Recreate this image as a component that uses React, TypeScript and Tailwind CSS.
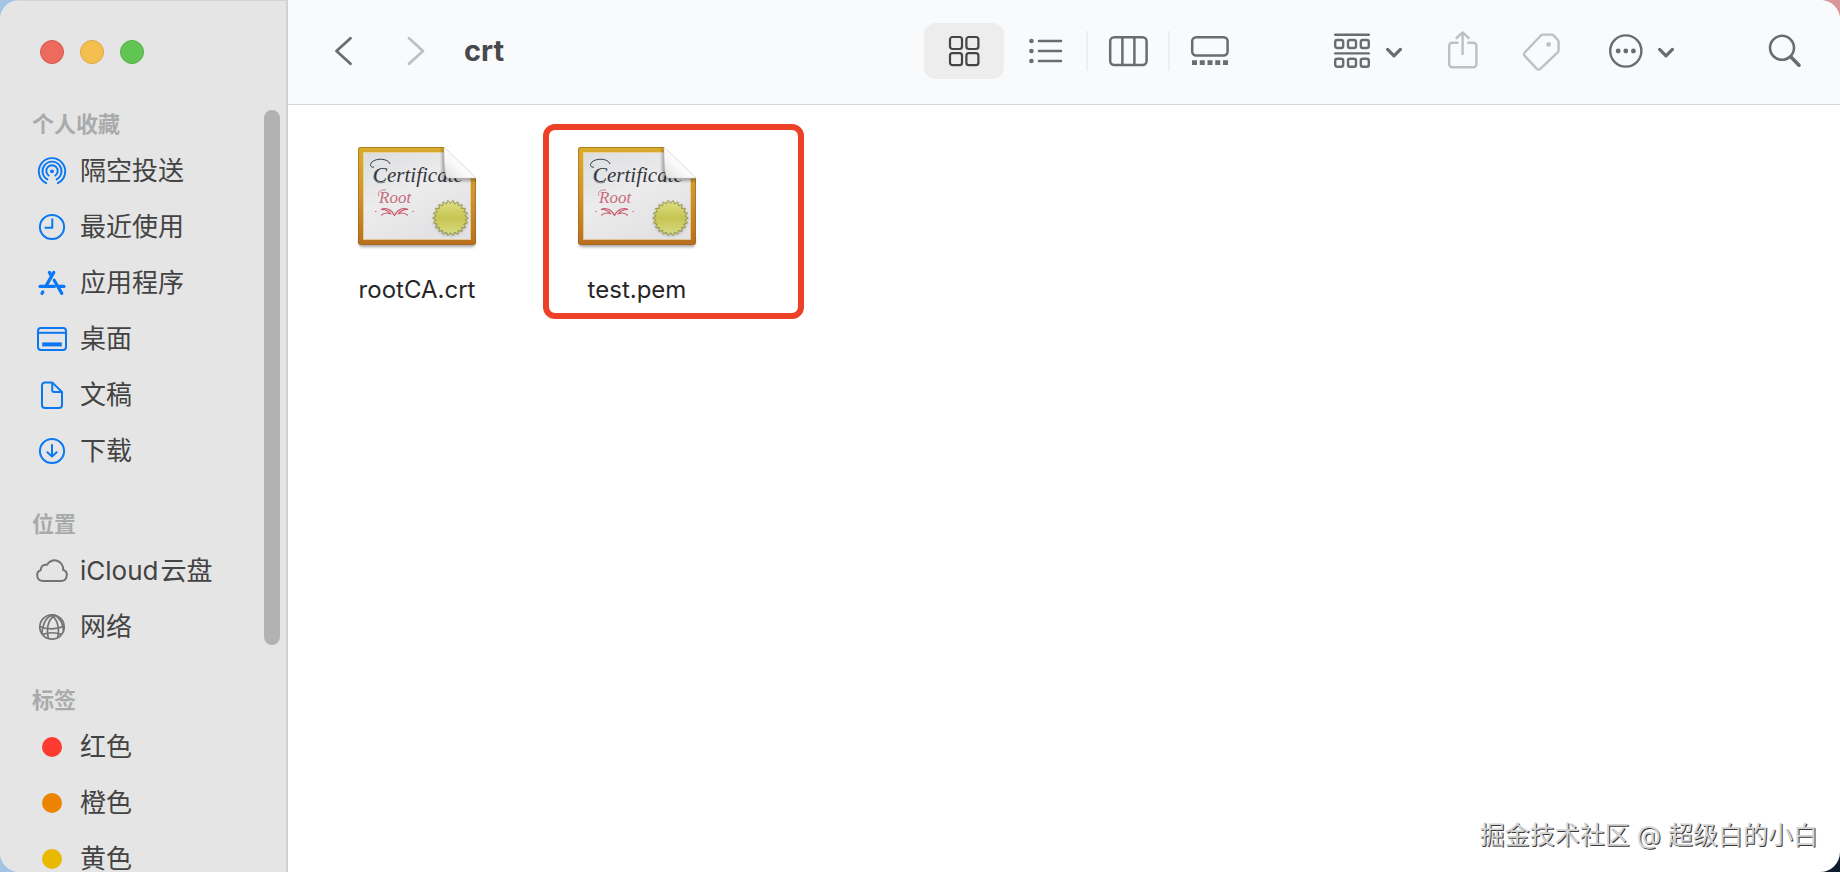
import React from 'react';

interface IIcon {
  className?: string;
}

interface IItem {
  id: string;
  label: React.ReactNode;
  icon: React.ReactNode;
}

interface ISection {
  title: string;
  items: IItem[];
}

interface IFile {
  name: string;
  marked?: boolean;
}

const AirDropIcon = () => (
  <svg viewBox="0 0 32 32" className="size-8" fill="none" stroke="currentColor" strokeWidth="1.9" strokeLinecap="round">
    <path d="M10.2 28.2a13.200 13.200 0 1 1 11.600 0" />
    <path d="M11.4 24.400a9.5 9.5 0 1 1 9.200 0" />
    <path d="M12.7 20.6a5.700 5.700 0 1 1 6.600 0" />
    <circle cx="16" cy="16.3" r="1.9" fill="currentColor" stroke="none" />
  </svg>
);

const ClockIcon = () => (
  <svg viewBox="0 0 32 32" className="size-8" fill="none" stroke="currentColor" strokeWidth="2" strokeLinecap="round" strokeLinejoin="round">
    <circle cx="16" cy="16" r="12.1" />
    <path d="M16.3 8.2v8.6H9.4" />
  </svg>
);

const AppsIcon = () => (
  <svg viewBox="0 0 32 32" className="size-8" fill="none" stroke="currentColor" strokeWidth="3.2" strokeLinecap="round">
    <path d="M17.8 5.4 10.2 18.6" />
    <path d="m13.4 5.4 2 3.6" />
    <path d="m18.2 13.200 7.600 13.200" />
    <path d="M4 19.4h14.400M23.4 19.4H28" />
    <path d="m6.8 25-.8 1.4" />
  </svg>
);

const DesktopIcon = () => (
  <svg viewBox="0 0 32 32" className="size-8" fill="none" stroke="currentColor" strokeWidth="2">
    <rect x="2" y="5" width="28" height="22" rx="3" />
    <path d="M2 9.8h28" />
    <path d="M6.2 21.4h19.6" strokeWidth="4" />
  </svg>
);

const DocumentIcon = () => (
  <svg viewBox="0 0 32 32" className="size-8" fill="none" stroke="currentColor" strokeWidth="2" strokeLinejoin="round">
    <path d="M9 3.4h7.2L26 13v13a3 3 0 0 1-3 3H9a3 3 0 0 1-3-3V6.4a3 3 0 0 1 3-3Z" />
    <path d="M16.2 3.4V11a2 2 0 0 0 2 2H26" />
  </svg>
);

const DownloadIcon = () => (
  <svg viewBox="0 0 32 32" className="size-8" fill="none" stroke="currentColor" strokeWidth="2" strokeLinecap="round" strokeLinejoin="round">
    <circle cx="16" cy="16" r="12.1" />
    <path d="M16 10v11.4M11.4 17.2l4.6 4.4 4.6-4.4" />
  </svg>
);

const CloudIcon = () => (
  <svg viewBox="0 0 34 32" className="h-8 w-[34px]" fill="none" stroke="currentColor" strokeWidth="2" strokeLinejoin="round">
    <path d="M8 26h18.200a5.800 5.800 0 0 0 1.900-11.200 8.600 8.600 0 0 0-16.100-5 5 5 0 0 0-6.200 5.200A5.700 5.700 0 0 0 8 26Z" />
  </svg>
);

const NetworkIcon = () => (
  <svg viewBox="0 0 32 32" className="size-8" fill="none" stroke="currentColor" strokeWidth="1.7">
    <circle cx="16" cy="16" r="12.2" />
    <path d="M19 4.200C13 8 10 16 12.400 27.600M19 4.200c-7-.4-11.400 4.400-13.200 18.200" />
    <path d="M15 4c6 3.400 9 12.600 6.600 22.600M19 4.200c5 2.800 8 8.200 8.400 15.600" />
    <path d="M4 15.600c7 3.200 17 3 24-.6M6.400 23.400c6-2 13.600-2 19.200 0" />
  </svg>
);

const Dot: React.FC<IIcon> = ({ className }) => (
  <span className={`block size-5 rounded-full ${className}`} />
);

const sections: ISection[] = [
  {
    title: '个人收藏',
    items: [
      { id: 'airdrop', label: '隔空投送', icon: <AirDropIcon /> },
      { id: 'recents', label: '最近使用', icon: <ClockIcon /> },
      { id: 'apps', label: '应用程序', icon: <AppsIcon /> },
      { id: 'desktop', label: '桌面', icon: <DesktopIcon /> },
      { id: 'documents', label: '文稿', icon: <DocumentIcon /> },
      { id: 'downloads', label: '下载', icon: <DownloadIcon /> },
    ],
  },
  {
    title: '位置',
    items: [
      {
        id: 'icloud',
        label: (
          <>
            <span className="mr-0.5">iCloud</span>云盘
          </>
        ),
        icon: <CloudIcon />,
      },
      { id: 'network', label: '网络', icon: <NetworkIcon /> },
    ],
  },
  {
    title: '标签',
    items: [
      { id: 'red', label: '红色', icon: <Dot className="bg-[#fd3a30]" /> },
      { id: 'orange', label: '橙色', icon: <Dot className="bg-[#ec8301]" /> },
      { id: 'yellow', label: '黄色', icon: <Dot className="bg-[#e9b800]" /> },
    ],
  },
];

const files: IFile[] = [{ name: 'rootCA.crt' }, { name: 'test.pem', marked: true }];

const sealPoints = Array.from({ length: 44 }, (_, i) => {
  const r = i % 2 === 0 ? 17.8 : 14.6;
  const a = (i * Math.PI) / 22;
  return `${(93.5 + r * Math.cos(a)).toFixed(2)},${(72 + r * Math.sin(a)).toFixed(2)}`;
}).join(' ');

const CertificateIcon = () => (
  <svg viewBox="0 0 120 104" className="h-[104px] w-[120px]" aria-hidden="true">
    <defs>
      <linearGradient id="frame" x1="0" y1="0" x2="0" y2="1">
        <stop offset="0" stopColor="#d9ac2c" />
        <stop offset="0.5" stopColor="#cf9430" />
        <stop offset="1" stopColor="#b96f1d" />
      </linearGradient>
      <linearGradient id="paper" x1="0" y1="0" x2="0.6" y2="1">
        <stop offset="0" stopColor="#dcdddf" />
        <stop offset="0.5" stopColor="#ececed" />
        <stop offset="1" stopColor="#e2e2e4" />
      </linearGradient>
      <linearGradient id="fold" x1="0" y1="1" x2="0.6" y2="0.4">
        <stop offset="0" stopColor="#dededf" />
        <stop offset="0.6" stopColor="#f8f8f8" />
        <stop offset="1" stopColor="#ffffff" />
      </linearGradient>
      <linearGradient id="seal" x1="0" y1="0" x2="0" y2="1">
        <stop offset="0" stopColor="#e0df86" />
        <stop offset="0.5" stopColor="#c6c552" />
        <stop offset="1" stopColor="#dadb86" />
      </linearGradient>
      <filter id="soft" x="-20%" y="-20%" width="140%" height="140%">
        <feGaussianBlur stdDeviation="1.6" />
      </filter>
      <clipPath id="sheet">
        <path d="M3 1h84l32 31v64a3 3 0 0 1-3 3H4a3 3 0 0 1-3-3V3a2 2 0 0 1 2-2Z" />
      </clipPath>
    </defs>
    <rect x="2" y="90" width="116" height="11" rx="3" fill="#000" opacity="0.35" filter="url(#soft)" />
    <g clipPath="url(#sheet)">
      <rect x="1" y="1" width="118" height="98" fill="url(#frame)" />
      <rect x="1.5" y="1.5" width="117" height="97" rx="2.5" fill="none" stroke="#9a6415" strokeOpacity="0.6" />
      <rect x="7" y="7" width="106" height="86" fill="url(#paper)" />
      <rect x="6.5" y="6.5" width="107" height="87" fill="none" stroke="#f4e6c4" strokeOpacity="0.7" />
      <text x="16" y="36" fontSize="21" fontStyle="italic" fontFamily="'Liberation Serif', serif" fill="#33363c">
        Certificate
      </text>
      <path d="M33 18c-2-6-14-6-18-2-3 3-1 6 2 5" fill="none" stroke="#3c4046" strokeWidth="1" />
      <path d="M28 36c-9 3-14-3-9-11" fill="none" stroke="#3c4046" strokeWidth="0.7" />
      <text x="22" y="57" fontSize="17" fontStyle="italic" fontFamily="'Liberation Serif', serif" fill="#c66c7c">
        Root
      </text>
      <path d="M29 44c-6-1-9 3-7 6" fill="none" stroke="#c86a7a" strokeWidth="0.8" />
      <g fill="none" stroke="#c95468" strokeWidth="1.1" strokeLinecap="round">
        <path d="M37.500 69.500c-3-6-9-8.500-13.500-6 4-.4 8 1.800 9.500 4.200-3-1.200-7-.6-9 1.400" />
        <path d="M37.500 69.500c3-6 9-8.500 13.500-6-4-.4-8 1.800-9.500 4.200 3-1.200 7-.6 9 1.400" />
        <path d="M18.500 65.500h.5M56 65.500h.5" />
      </g>
      <path d="M85 1v34h36Z" fill="#000" opacity="0.3" filter="url(#soft)" />
    </g>
    <polygon points={sealPoints} fill="#333" opacity="0.4" filter="url(#soft)" transform="translate(0 1)" />
    <polygon points={sealPoints} fill="url(#seal)" stroke="#8d8c3c" strokeWidth="0.8" />
    <path d="M87 1l32 31H93c-3 0-4-1-4.500-4C87.500 21 87 11 87 1Z" fill="url(#fold)" stroke="#d0d0d2" strokeWidth="0.5" />
  </svg>
);

const GridIcon = () => (
  <svg viewBox="0 0 32 32" className="size-8" fill="none" stroke="currentColor" strokeWidth="2.2">
    <rect x="2" y="2" width="12" height="12" rx="2.5" />
    <rect x="18.4" y="2" width="12" height="12" rx="2.5" />
    <rect x="2" y="18.2" width="12" height="12" rx="2.5" />
    <rect x="18.4" y="18.2" width="12" height="12" rx="2.5" />
  </svg>
);

const ListIcon = () => (
  <svg viewBox="0 0 36 32" className="h-8 w-9" fill="none" stroke="currentColor" strokeWidth="2.5" strokeLinecap="round">
    <path d="M11 6h22M11 16h22M11 26h22" />
    <g fill="currentColor" stroke="none">
      <circle cx="3.4" cy="6" r="2.3" />
      <circle cx="3.4" cy="16" r="2.3" />
      <circle cx="3.4" cy="26" r="2.3" />
    </g>
  </svg>
);

const ColumnsIcon = () => (
  <svg viewBox="0 0 40 32" className="h-8 w-10" fill="none" stroke="currentColor" strokeWidth="2.5">
    <rect x="2.2" y="2.2" width="36.4" height="27.8" rx="4" />
    <path d="M14.4 2v28M26.4 2v28" />
  </svg>
);

const GalleryIcon = () => (
  <svg viewBox="0 0 40 32" className="h-8 w-10" fill="none" stroke="currentColor" strokeWidth="2.5">
    <rect x="2.2" y="2.2" width="35.4" height="18.4" rx="4" />
    <path d="M2 27.6h36" strokeWidth="4.8" strokeDasharray="5 2.75" />
  </svg>
);

const GroupIcon = () => (
  <svg viewBox="0 0 36 36" className="size-9" fill="none" stroke="currentColor" strokeWidth="2.4" strokeLinecap="round">
    <path d="M1.2 1.800h33.600M1.200 20.400h33.600" />
    <rect x="1.2" y="7" width="8" height="8" rx="2" />
    <rect x="14" y="7" width="8" height="8" rx="2" />
    <rect x="26.8" y="7" width="8" height="8" rx="2" />
    <rect x="1.2" y="25.8" width="8" height="8" rx="2" />
    <rect x="14" y="25.8" width="8" height="8" rx="2" />
    <rect x="26.8" y="25.8" width="8" height="8" rx="2" />
  </svg>
);

const ShareIcon = () => (
  <svg viewBox="0 0 40 40" className="size-10" fill="none" stroke="currentColor" strokeWidth="2.4" strokeLinecap="round" strokeLinejoin="round">
    <path d="M14.500 11.800H9.200a3 3 0 0 0-3 3v18.400a3 3 0 0 0 3 3h21.200a3 3 0 0 0 3-3V14.800a3 3 0 0 0-3-3h-5.300" />
    <path d="M19.600 23V1.600M13.600 7l6-5.600 6 5.600" />
  </svg>
);

const TagIcon = () => (
  <svg viewBox="0 0 40 40" className="size-10" fill="none" stroke="currentColor" strokeWidth="2.4" strokeLinejoin="round">
    <path d="M22 3.600h8.600a3 3 0 0 1 2.200 1l4 4.400a3 3 0 0 1 .8 2v8.200a3 3 0 0 1-.9 2.100L19.300 37.900a2.400 2.400 0 0 1-3.400 0L3.700 24.900a2.400 2.400 0 0 1 0-3.400L19.900 4.500a3 3 0 0 1 2.100-.9Z" />
    <circle cx="27.6" cy="13.4" r="2.4" fill="currentColor" stroke="none" />
  </svg>
);

const MoreIcon = () => (
  <svg viewBox="0 0 36 36" className="size-9" fill="none" stroke="currentColor" strokeWidth="2.4">
    <circle cx="17.8" cy="18" r="15.6" />
    <g fill="currentColor" stroke="none">
      <circle cx="10.2" cy="18" r="2.4" />
      <circle cx="17.8" cy="18" r="2.4" />
      <circle cx="25.4" cy="18" r="2.4" />
    </g>
  </svg>
);

const ChevronDown = () => (
  <svg viewBox="0 0 16 12" className="mt-1 h-3 w-4" fill="none" stroke="currentColor" strokeWidth="3.2" strokeLinecap="round" strokeLinejoin="round">
    <path d="m1.600 2.400 6.400 6.400 6.400-6.400" />
  </svg>
);

const SearchIcon = () => (
  <svg viewBox="0 0 36 36" className="size-9" fill="none" stroke="currentColor" strokeLinecap="round">
    <circle cx="15" cy="14.8" r="12" strokeWidth="2.6" />
    <path d="m24 24 8 8.200" strokeWidth="3.6" />
  </svg>
);

const views = [
  { id: 'icons', label: '图标', icon: <GridIcon /> },
  { id: 'list', label: '列表', icon: <ListIcon /> },
  { id: 'columns', label: '分栏', icon: <ColumnsIcon /> },
  { id: 'gallery', label: '画廊', icon: <GalleryIcon /> },
];

const Sidebar = () => (
  <aside className="relative w-72 shrink-0 overflow-hidden border-r-2 border-t border-r-[#cfd0d0] border-t-[#d2d3d4] bg-[#e5e5e5]">
    <div className="flex gap-4 px-10 pt-[39px] pb-[42px]">
      <button aria-label="关闭" className="size-6 rounded-full border border-[#d5574d] bg-[#ec6a5e]" />
      <button aria-label="最小化" className="size-6 rounded-full border border-[#dba740] bg-[#f5bf4f]" />
      <button aria-label="缩放" className="size-6 rounded-full border border-[#52ad45] bg-[#61c554]" />
    </div>

    <nav className="flex flex-col gap-[27px]">
      {sections.map((section) => (
        <section key={section.title}>
          <h2 className="h-[37px] pl-8 text-[22px] leading-9 font-bold text-[#a9abab]">
            {section.title}
          </h2>
          <ul>
            {section.items.map((item) => (
              <li key={item.id}>
                <a
                  href={`#${item.id}`}
                  className="flex h-14 items-center gap-2 pl-8 text-[26px] leading-8 text-[#434343]"
                >
                  <span
                    className={`flex w-10 justify-center ${
                      section.title === '位置' ? 'text-[#747474]' : 'text-[#0a78f5]'
                    }`}
                  >
                    {item.icon}
                  </span>
                  <span>{item.label}</span>
                </a>
              </li>
            ))}
          </ul>
        </section>
      ))}
    </nav>

    <div className="absolute top-[109px] right-1.5 h-[535px] w-4 rounded-full bg-[#b2b2b2]" />
  </aside>
);

const Toolbar = () => (
  <header className="flex h-[105px] shrink-0 items-center border-b border-[#d5d9db] bg-[#f9fafc] pr-[27px] pb-0.5 pl-7 text-[#6b6c6e]">
    <div className="flex gap-4">
      <button aria-label="后退" className="flex size-14 items-center justify-center">
        <svg viewBox="0 0 20 32" className="h-8 w-5" fill="none" stroke="currentColor" strokeWidth="2.8" strokeLinecap="round" strokeLinejoin="round">
          <path d="M16.500 3.200 2.500 16l14 12.800" />
        </svg>
      </button>
      <button aria-label="前进" className="flex size-14 items-center justify-center text-[#bfc0c1]">
        <svg viewBox="0 0 20 32" className="h-8 w-5" fill="none" stroke="currentColor" strokeWidth="2.8" strokeLinecap="round" strokeLinejoin="round">
          <path d="m3 3.200 14 12.800-14 12.800" />
        </svg>
      </button>
    </div>
    <h1 className="ml-5 text-[29px] font-bold text-[#474849]">crt</h1>

    <div className="ml-auto flex items-center">
      {views.map((view, i) => (
        <React.Fragment key={view.id}>
          {i > 0 && <span className={`h-10 w-0.5 ${i > 1 ? 'bg-[#eceeef]' : ''}`} />}
          <button
            aria-label={view.label}
            className={`flex h-14 w-20 items-center justify-center rounded-xl ${
              i === 0 ? 'bg-[#ededee] text-[#434445]' : ''
            }`}
          >
            {view.icon}
          </button>
        </React.Fragment>
      ))}
    </div>

    <button aria-label="分组" className="ml-[84px] flex h-14 items-center gap-4">
      <GroupIcon />
      <ChevronDown />
    </button>
    <button aria-label="共享" className="ml-[41px] text-[#bfc0c1]">
      <ShareIcon />
    </button>
    <button aria-label="编辑标签" className="ml-[38px] text-[#bfc0c1]">
      <TagIcon />
    </button>
    <button aria-label="更多" className="ml-[47px] flex h-14 items-center gap-[14px]">
      <MoreIcon />
      <ChevronDown />
    </button>
    <button aria-label="搜索" className="ml-[83px] flex size-14 items-center justify-center">
      <SearchIcon />
    </button>
  </header>
);

const File: React.FC<IFile> = ({ name, marked }) => (
  <li className="relative flex w-[220px] flex-col items-center gap-6">
    <CertificateIcon />
    <p className="text-2xl leading-8 text-[#262626]">{name}</p>
    {marked && (
      <div className="absolute -top-[22px] left-4 h-[195px] w-[261px] rounded-xl border-6 border-[#ee4027]" />
    )}
  </li>
);

const App: React.FC = () => (
  <div className="h-screen bg-[radial-gradient(circle_at_100%_100%,#0d1b2e_0%,transparent_30%),linear-gradient(to_right,#a3c4e4,#d9979b)] font-['Inter','Noto_Sans_CJK_SC',sans-serif]">
    <div className="flex h-full overflow-hidden rounded-[20px] bg-white">
      <Sidebar />
      <main className="flex min-w-0 flex-1 flex-col">
        <Toolbar />
        <ul className="flex flex-1 pt-[41px] pl-[19px]">
          {files.map((file) => (
            <File key={file.name} {...file} />
          ))}
        </ul>
        <footer className="pr-[22px] pb-[21px] text-right text-[25px] leading-8 text-[#d4d4d4] [text-shadow:1px_1px_0_#3a3a3a]">
          掘金技术社区 @ 超级白的小白
        </footer>
      </main>
    </div>
  </div>
);

export default App;
